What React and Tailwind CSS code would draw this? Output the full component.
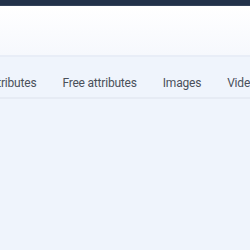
export default function App() {
  const tabs = ['Attributes', 'Free attributes', 'Images', 'Videos', 'Documents'];
  return (
    <div className="min-h-screen w-[250px] overflow-hidden bg-[#eff4fc]" style={{ fontFamily: 'Roboto, "Liberation Sans", sans-serif' }}>
      <div className="h-[6px] border-b border-[#34435a] bg-[#22324a]" />
      <div className="h-[49px] bg-gradient-to-b from-white to-[#f6f8fd]" />
      <div className="h-[2px] bg-[#e8edf7]" />
      <div className="border-b-2 border-[#e6ebf4]">
        <div className="ml-[-14px] flex h-[40px] items-center gap-[26px] whitespace-nowrap pt-[11px] text-[12px] tracking-[-0.2px] text-[#4a505a]">
          {tabs.map((t) => (
            <span key={t}>{t}</span>
          ))}
        </div>
      </div>
    </div>
  );
}
